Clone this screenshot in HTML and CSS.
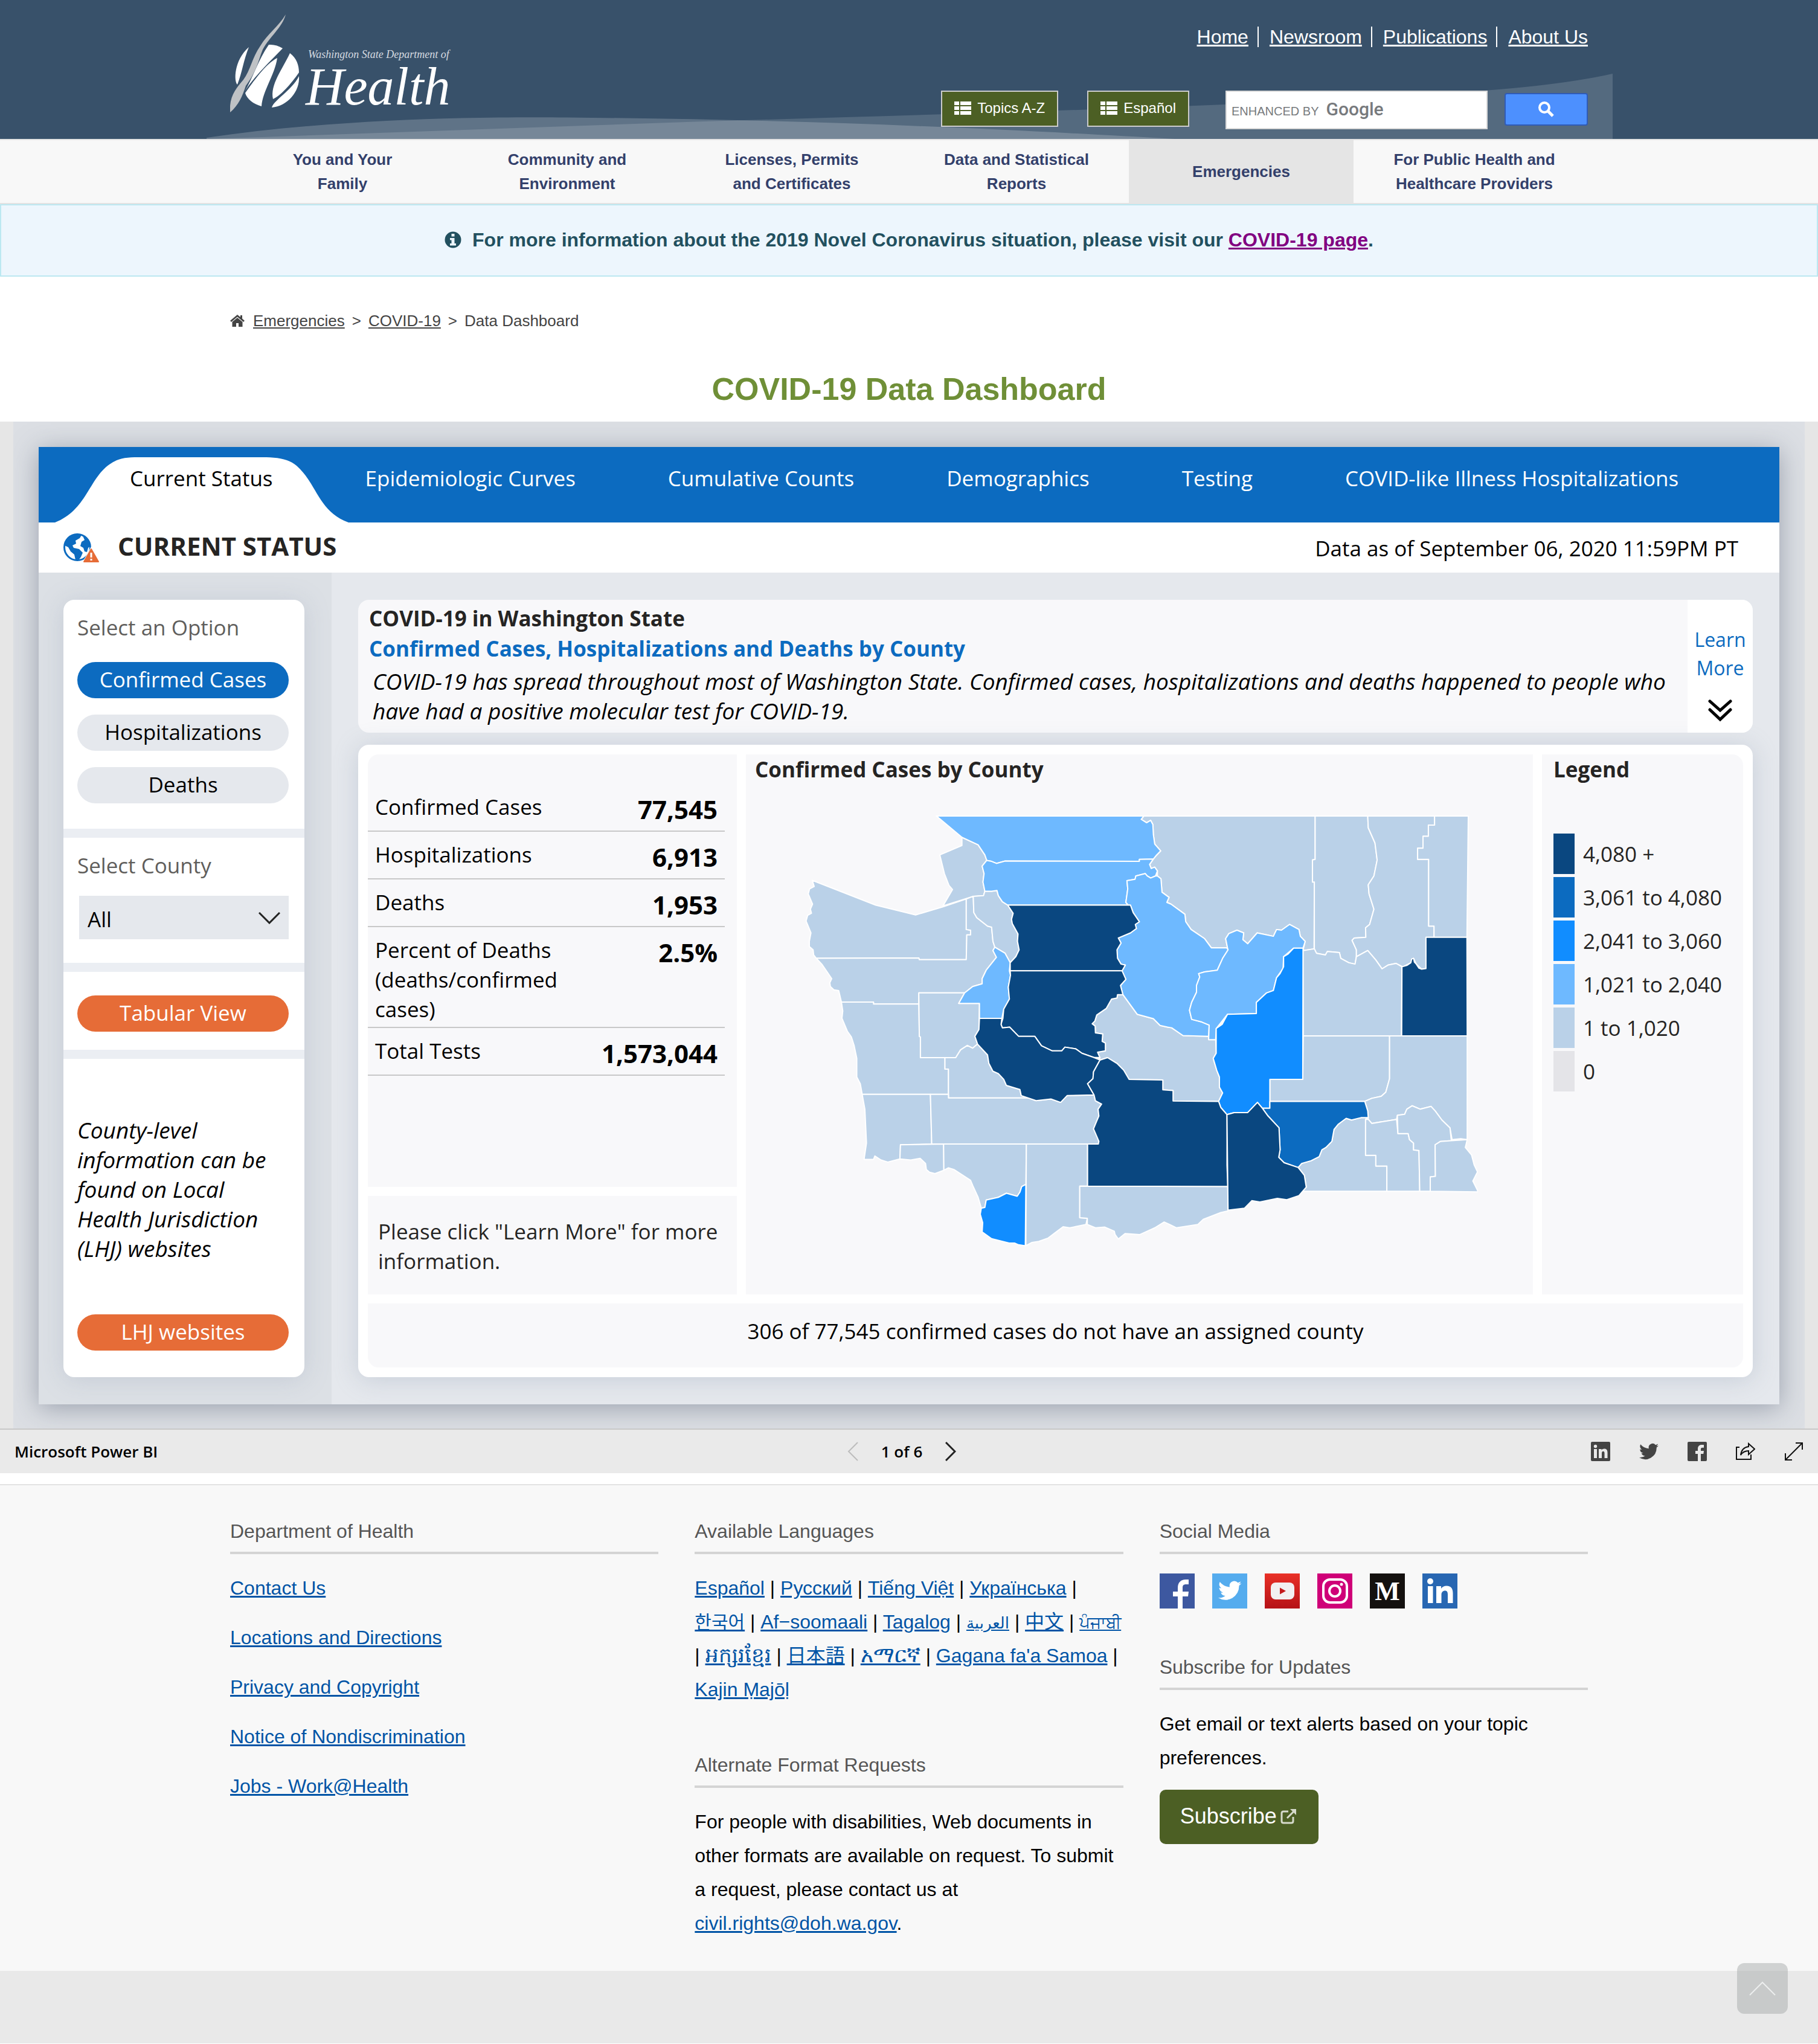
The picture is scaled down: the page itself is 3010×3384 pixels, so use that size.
FILE: index.html
```html
<!DOCTYPE html>
<html lang="en">
<head>
<meta charset="utf-8">
<meta name="viewport" content="width=device-width, initial-scale=1">
<title>COVID-19 Data Dashboard :: Washington State Department of Health</title>
<link rel="stylesheet" href="styles.css">
</head>
<body>
<header class="site-header">
  <svg class="swoosh" viewBox="342 120 2328 110" preserveAspectRatio="none" aria-hidden="true">
    <path d="M342 230C700 218 1050 204 1400 194C1800 182 2160 171 2457 150Q2590 140 2670 122V230Z" fill="#fff" fill-opacity=".145"/>
    <path d="M342 228C560 196 800 193 940 194.500C1300 198 1560 208 1945 230H342Z" fill="#fff" fill-opacity=".2"/>
  </svg>
  <div class="container header-inner">
    <a class="logo" href="#" aria-label="Washington State Department of Health">
      <svg width="390" height="186" viewBox="382 22 390 186">
        <path d="M413 78C388 100 388 135 394 140C402 120 404 100 413 78Z" fill="#fff"/>
        <path d="M446 74Q458 73 469 80C452 98 420 128 406 152C420 128 428 100 446 74Z" fill="#fff"/>
        <path d="M460 96C456 124 436 150 434 176C420 172 410 164 407 154C420 136 440 106 460 96Z" fill="#fff"/>
        <path d="M481 88C492 96 496 108 496 120C482 140 466 158 453 164C448 140 468 116 481 88Z" fill="#fff"/>
        <path d="M496 126C498 152 476 176 451 178C454 166 484 150 496 126Z" fill="#fff"/>
        <path d="M474 24C462 44 444 56 432 76C418 96 416 116 404 132C392 146 380 160 382 186C396 174 402 160 408 142C426 118 428 102 436 82C448 60 468 46 474 24Z" fill="#bfc2c5"/>
        <text x="511" y="96" class="logo-small">Washington State Department of</text>
        <text x="507" y="173" class="logo-big">Health</text>
      </svg>
    </a>
    <div class="header-tools">
      <nav class="top-links" aria-label="Utility">
        <a href="#">Home</a><a href="#">Newsroom</a><a href="#">Publications</a><a href="#">About Us</a>
      </nav>
      <div class="search-row">
        <button class="green-btn" type="button"><svg width="28" height="22" viewBox="0 0 28 22" fill="#fff"><path d="M0 0h8v6H0zM10 0h18v6H10zM0 8h8v6H0zM10 8h18v6H10zM0 16h8v6H0zM10 16h18v6H10z"/></svg>Topics A-Z</button>
        <button class="green-btn" type="button"><svg width="28" height="22" viewBox="0 0 28 22" fill="#fff"><path d="M0 0h8v6H0zM10 0h18v6H10zM0 8h8v6H0zM10 8h18v6H10zM0 16h8v6H0zM10 16h18v6H10z"/></svg>Español</button>
        <form class="search">
          <div class="search-field">
            <input id="q" type="text">
            <label for="q"><span>ENHANCED BY</span><b>Google</b></label>
          </div>
          <button class="search-btn" type="button" aria-label="Search"><svg width="28" height="28" viewBox="0 0 28 28" fill="none" stroke="#fff" stroke-width="4"><circle cx="11" cy="11" r="8"/><path d="M17 17l8 8" stroke-width="5"/></svg></button>
        </form>
      </div>
    </div>
  </div>
</header>

<nav class="main-nav" aria-label="Main">
  <div class="container nav-inner">
    <a href="#">You and Your<br>Family</a>
    <a href="#">Community and<br>Environment</a>
    <a href="#">Licenses, Permits<br>and Certificates</a>
    <a href="#">Data and Statistical<br>Reports</a>
    <a href="#" class="active">Emergencies</a>
    <a href="#">For Public Health and<br>Healthcare Providers</a>
  </div>
</nav>

<div class="alert">
  <svg width="28" height="28" viewBox="0 0 28 28"><circle cx="14" cy="14" r="13.500" fill="#22505f"/><path d="M11.500 4h5v4.500h-5zM9 11h7.500v9H19v3.500H9V20h2.500v-5.500H9z" fill="#edf6fd"/></svg>
  <p>For more information about the 2019 Novel Coronavirus situation, please visit our <a href="#">COVID-19 page</a>.</p>
</div>

<div class="container breadcrumb">
  <svg width="24" height="20" viewBox="0 0 24 20" fill="#444"><path d="M12 0L0 10l2 2L12 3.500 22 12l2-2-4-3.500V1h-3v3z"/><path d="M12 5L3.500 12v8H10v-6h4v6h6.500v-8z"/></svg>
  <a href="#">Emergencies</a><span>&gt;</span><a href="#">COVID-19</a><span>&gt;</span><span>Data Dashboard</span>
</div>
<h1>COVID-19 Data Dashboard</h1>

<section class="embed">
  <div class="canvas">
    <div class="report">
      <nav class="tabs" aria-label="Report pages">
        <a class="tab current" href="#">
          <svg class="tab-shape" viewBox="0 0 486 108" preserveAspectRatio="none" aria-hidden="true"><path d="M0 108C52 88 56 36 90 12C104 2 116 0 138 0H344C366 0 386 2 400 14C434 44 436 90 486 108Z" fill="#fff"/></svg>
          <span>Current Status</span></a>
        <a class="tab" href="#">Epidemiologic Curves</a>
        <a class="tab" href="#">Cumulative Counts</a>
        <a class="tab" href="#">Demographics</a>
        <a class="tab" href="#">Testing</a>
        <a class="tab" href="#">COVID-like Illness Hospitalizations</a>
      </nav>
      <div class="status-row">
        <svg width="60" height="50" viewBox="0 0 60 50">
          <circle cx="23" cy="23" r="21.500" fill="#fff" stroke="#0c6bc0" stroke-width="3"/>
          <path d="M2 20C3 10 12 2 22 2l8 1-3 5-7 4 1 5-6 3 2 4 9 2 6 6-3 7-5 7-4-2-2-9-6-5-4-7z" fill="#0c6bc0"/>
          <path d="M32 4c7 3 12 9 13 17l-4 3-2 7-4-1-2-6-5-3 2-7 5-3z" fill="#0c6bc0"/>
          <path d="M46 22L61 49H31z" fill="#fff"/>
          <path d="M46 26l12 21H34z" fill="#e66c37" stroke="#e66c37" stroke-width="2" stroke-linejoin="round"/>
          <path d="M46 32v8M46 42v3" stroke="#fff" stroke-width="3"/>
        </svg>
        <h2>CURRENT STATUS</h2>
        <p>Data as of September 06, 2020 11:59PM PT</p>
      </div>
      <div class="report-body">
        <aside class="side">
          <div class="side-card">
            <section class="s-options">
              <h3>Select an Option</h3>
              <button class="pill selected" type="button">Confirmed Cases</button>
              <button class="pill" type="button">Hospitalizations</button>
              <button class="pill" type="button">Deaths</button>
            </section>
            <section class="s-county">
              <label for="county">Select County</label>
              <div class="select-wrap">
                <select id="county"><option>All</option></select>
                <svg width="36" height="20" viewBox="0 0 36 20" fill="none" stroke="#222" stroke-width="3"><path d="M1 1l17 17L35 1"/></svg>
              </div>
            </section>
            <section class="s-tab"><button class="pill orange" type="button">Tabular View</button></section>
            <section class="s-lhj">
              <p>County-level information can be found on Local Health Jurisdiction (LHJ) websites</p>
              <button class="pill orange" type="button">LHJ websites</button>
            </section>
          </div>
        </aside>
        <div class="main">
          <div class="intro">
            <div class="intro-text">
              <h3>COVID-19 in Washington State</h3>
              <h3 class="blue">Confirmed Cases, Hospitalizations and Deaths by County</h3>
              <p>COVID-19 has spread throughout most of Washington State. Confirmed cases, hospitalizations and deaths happened to people who<br>have had a positive molecular test for COVID-19.</p>
            </div>
            <a class="learn" href="#">Learn<br>More
              <svg width="40" height="38" viewBox="0 0 40 38" fill="none" stroke="#000" stroke-width="5" stroke-linecap="round"><path d="M3 4l17 15L37 4M3 18l17 16 17-16"/></svg>
            </a>
          </div>
          <div class="data-card">
            <div class="cell stats">
              <table>
                <tr><th scope="row">Confirmed Cases</th><td>77,545</td></tr>
                <tr><th scope="row">Hospitalizations</th><td>6,913</td></tr>
                <tr><th scope="row">Deaths</th><td>1,953</td></tr>
                <tr><th scope="row">Percent of Deaths (deaths/confirmed cases)</th><td>2.5%</td></tr>
                <tr><th scope="row">Total Tests</th><td>1,573,044</td></tr>
              </table>
            </div>
            <div class="cell map">
              <h3>Confirmed Cases by County</h3>
              <svg class="map-svg" viewBox="1327 1346 1120 725" role="img" aria-label="Map of Washington counties">
                <g transform="translate(1240 1220) scale(.4464 .5612)">
                  <g class="c1">
                    <path d="M790 298L850 320 875 350 882 366 865 383 872 405 868 430 875 457 870 470 832 472 720 500 755 452 742 440 725 405 708 350 790 322Z"/>
                    <path d="M235 425L470 498 618 527 720 503 806 480 806 570 822 572 822 586 808 586 806 659 632 659 630 654 250 655 240 645 238 630 224 620 224 605 230 580 212 545 218 528 232 522 228 510 236 495 220 465 225 450 242 443Z"/>
                    <path d="M806 480L832 472 834 520 845 535 885 560 900 563 905 605 912 622 905 632 918 652 880 690 865 715 865 730 830 738 800 757 630 757 630 790 462 790 462 784 343 784 333 750 315 748 302 738 300 727 307 715 290 695 270 672 250 655 630 654 632 659 806 659 808 586 822 586 822 572 806 570Z"/>
                    <path d="M832 472L870 470 875 457 900 457 920 455 925 470 940 488 960 498 980 522 974 540 977 553 998 583 996 605 1002 630 990 650 969 668 950 640 912 622 905 605 900 563 885 560 845 535 834 520Z"/>
                    <path d="M343 784L462 784 462 790 630 790 632 885 636 887 636 948 727 948 727 982 740 982 740 1056 420 1056 413 1025 400 1005 400 950 390 912 380 887 365 870 345 832 348 810Z"/>
                    <path d="M630 757L800 757 778 788 855 788 853 865 838 885 848 908 830 920 810 912 785 925 767 948 636 948 636 887 632 885Z"/>
                    <path d="M767 948L785 925 810 912 830 920 848 908 885 940 890 965 905 988 925 995 945 1012 955 1030 1005 1042 1010 1060 1040 1067 740 1067 740 982 727 982 727 948Z"/>
                    <path d="M420 1056L673 1056 678 1203 562 1205 560 1247 515 1256 490 1250 467 1238 462 1248 427 1248 436 1200 430 1100Z"/>
                    <path d="M673 1056L740 1056 740 1067 1040 1067 1065 1075 1120 1070 1156 1080 1180 1060 1280 1058 1285 1075 1308 1085 1295 1100 1298 1120 1290 1135 1278 1158 1287 1170 1298 1195 1296 1203 678 1203Z"/>
                    <path d="M562 1205L722 1203 723 1280 690 1290 670 1286 658 1278 655 1260 635 1245 600 1250 560 1247Z"/>
                    <path d="M722 1203L1029 1203 1027 1322 1012 1328 1005 1345 995 1357 955 1348 925 1360 880 1368 875 1390 862 1392 850 1360 830 1325 822 1310 760 1278 740 1273 723 1280Z"/>
                    <path d="M1029 1203L1256 1203 1256 1327 1227 1327 1227 1420 1255 1422 1250 1440 1190 1450 1165 1447 1135 1465 1110 1480 1075 1490 1050 1493 1027 1503Z"/>
                    <path d="M1387 762L1440 820 1500 833 1525 853 1553 858 1568 860 1610 883 1705 885 1705 895 1731 895 1733 935 1722 950 1735 985 1745 1005 1745 1035 1757 1052 1742 1077 1573 1076 1573 1045 1535 1043 1535 1014 1410 1012 1365 965 1330 948 1302 955 1293 932 1322 928 1322 905 1310 900 1312 878 1285 875 1284 855 1273 848 1283 840 1290 822 1325 803 1345 775 1365 772 1367 762Z"/>
                    <path d="M1465 235L2100 235 2100 363 2090 365 2090 430 2097 430 2096 627 2055 632 2063 605 2045 590 2040 570 2005 555 1975 572 1957 570 1945 590 1915 585 1885 580 1850 612 1832 600 1835 580 1810 572 1780 582 1768 597 1775 624 1715 624 1690 597 1640 570 1620 547 1617 525 1565 495 1550 490 1558 475 1532 460 1528 420 1515 412 1515 397 1505 386 1492 390 1486 378 1500 362 1510 352 1527 338 1505 318 1500 290 1498 260 1490 248 1475 255 1455 245Z"/>
                    <path d="M2100 235L2295 235 2297 270 2322 315 2330 365 2318 412 2297 438 2300 465 2318 510 2302 555 2287 565 2288 593 2245 595 2237 602 2253 630 2253 650 2248 672 2225 668 2195 655 2190 638 2145 635 2138 645 2105 640 2097 627 2097 430 2090 430 2090 365 2100 363Z"/>
                    <path d="M2295 235L2543 235 2543 262 2520 262 2520 295 2500 295 2500 330 2480 330 2480 363 2521 363 2521 560 2541 560 2541 593 2511 593 2511 685 2495 687 2475 672 2465 655 2455 668 2425 680 2400 670 2370 675 2348 686 2325 660 2295 632 2253 650 2253 630 2237 602 2245 595 2288 593 2287 565 2302 555 2318 510 2300 465 2297 438 2318 412 2330 365 2322 315 2297 270Z"/>
                    <path d="M2543 235L2668 235 2663 593 2541 593 2541 560 2521 560 2521 363 2480 363 2480 330 2500 330 2500 295 2520 295 2520 262 2543 262Z"/>
                    <path d="M2055 632L2097 627 2105 640 2138 645 2145 635 2190 638 2195 655 2225 668 2248 672 2253 650 2295 632 2325 660 2348 686 2370 675 2400 670 2422 680 2420 884 2056 884Z"/>
                    <path d="M2056 884L2376 884 2376 1010 2362 1050 2345 1062 2310 1068 2284 1077 1932 1077 1932 1012 2054 1012Z"/>
                    <path d="M2376 884L2664 884 2664 1190 2640 1187 2608 1190 2600 1155 2570 1132 2545 1105 2530 1092 2490 1100 2460 1090 2440 1100 2432 1115 2405 1118 2402 1130 2310 1142 2297 1130 2295 1105 2284 1077 2310 1068 2345 1062 2362 1050 2376 1010Z"/>
                    <path d="M1227 1327L1776 1328 1777 1400 1750 1405 1685 1425 1665 1440 1585 1450 1560 1440 1540 1433 1505 1450 1450 1470 1395 1467 1370 1483 1358 1470 1355 1460 1320 1448 1285 1450 1255 1440 1255 1422 1227 1420Z"/>
                    <path d="M2037 1272L2050 1260 2085 1252 2115 1240 2125 1220 2140 1213 2162 1195 2170 1160 2185 1145 2215 1127 2235 1132 2270 1125 2297 1125 2287 1130 2287 1236 2325 1236 2325 1268 2366 1268 2366 1342 2050 1342 2067 1330 2060 1295Z"/>
                    <path d="M2287 1130L2297 1130 2310 1142 2402 1130 2407 1172 2445 1172 2450 1190 2465 1200 2465 1220 2485 1222 2488 1342 2366 1342 2366 1268 2325 1268 2325 1236 2287 1236Z"/>
                    <path d="M2405 1118L2432 1115 2440 1100 2460 1090 2490 1100 2530 1092 2545 1105 2570 1132 2600 1155 2605 1193 2565 1195 2545 1205 2546 1298 2527 1300 2527 1342 2488 1342 2485 1222 2465 1220 2465 1200 2450 1190 2445 1172 2407 1172Z"/>
                    <path d="M2605 1193L2664 1190 2657 1213 2680 1235 2690 1265 2702 1285 2685 1312 2705 1344 2527 1342 2527 1300 2546 1298 2545 1205 2565 1195Z"/>
                  </g>
                  <g class="c2">
                    <path d="M695 235L1465 235 1455 245 1475 255 1490 248 1498 260 1500 290 1505 318 1527 338 1510 352 1500 362 1448 363 1448 369 950 368 918 375 900 369 882 366 875 350 850 320 790 298Z"/>
                    <path d="M882 366L900 369 918 375 950 368 1448 369 1448 363 1500 362 1486 378 1492 390 1505 386 1515 397 1508 412 1490 418 1477 412 1470 405 1435 412 1432 422 1402 426 1405 450 1398 490 1407 498 960 498 940 488 925 470 920 455 900 457 875 457 868 430 872 405 865 383Z"/>
                    <path d="M912 622L950 640 969 668 966 692 970 705 962 740 966 775 945 805 938 832 855 832 855 788 778 788 800 757 830 738 865 730 865 715 880 690 918 652 905 632Z"/>
                    <path d="M1515 412L1508 412 1490 418 1477 412 1470 405 1435 412 1432 422 1402 426 1405 450 1398 490 1407 498 1415 498 1425 520 1448 547 1433 555 1437 567 1415 580 1370 595 1380 610 1365 630 1367 655 1380 672 1396 675 1384 692 1398 717 1378 735 1387 762 1440 820 1500 833 1525 853 1553 858 1568 860 1610 883 1705 885 1707 852 1680 843 1642 835 1634 808 1642 785 1660 755 1660 735 1672 710 1668 700 1690 695 1737 690 1757 655 1777 630 1772 624 1715 624 1690 597 1640 570 1620 547 1617 525 1565 495 1550 490 1558 475 1532 460 1528 420Z"/>
                    <path d="M1775 624L1768 597 1780 582 1810 572 1835 580 1832 600 1850 612 1885 580 1915 585 1945 590 1957 570 1975 572 2005 555 2040 570 2045 590 2063 605 2055 625 2020 625 1983 650 1981 685 1957 712 1945 750 1920 757 1882 785 1882 818 1775 820 1733 862 1731 895 1705 895 1707 852 1680 843 1642 835 1634 808 1642 785 1660 755 1660 735 1672 710 1668 700 1690 695 1737 690 1757 655 1777 630Z"/>
                  </g>
                  <g class="c3">
                    <path d="M1027 1322L1025 1503 1000 1500 985 1495 965 1495 900 1482 865 1462 867 1435 858 1410 862 1392 875 1390 880 1368 925 1360 955 1348 995 1357 1005 1345 1012 1328Z"/>
                    <path d="M2055 625L2054 1012 1932 1012 1932 1097 1904 1097 1886 1080 1850 1110 1800 1110 1773 1116 1750 1095 1742 1077 1757 1052 1745 1035 1745 1005 1735 985 1722 950 1733 935 1733 862 1755 850 1775 820 1882 818 1882 785 1920 757 1945 750 1957 712 1970 700 1983 680 1983 650 2000 642 2020 625Z"/>
                  </g>
                  <g class="c4">
                    <path d="M1904 1097L1932 1097 1932 1077 2284 1077 2295 1105 2297 1125 2270 1125 2235 1132 2215 1127 2185 1145 2170 1160 2162 1195 2140 1213 2125 1220 2115 1240 2085 1252 2050 1260 2037 1272 1985 1258 1965 1242 1970 1220 1966 1155 1925 1120Z"/>
                  </g>
                  <g class="c5">
                    <path d="M960 498L1415 498 1425 520 1448 547 1433 555 1437 567 1415 580 1370 595 1380 610 1365 630 1367 655 1380 672 1396 675 1384 692 969 692 969 668 990 650 1002 630 996 605 998 583 977 553 974 540 980 522Z"/>
                    <path d="M969 692L1384 692 1398 717 1378 735 1387 762 1367 762 1365 772 1345 775 1325 803 1290 822 1283 840 1273 848 1284 855 1285 875 1312 878 1310 900 1322 905 1322 928 1293 932 1302 948 1278 947 1235 935 1212 922 1172 917 1160 928 1125 928 1085 913 1060 885 1000 885 967 858 940 860 935 850 942 832 945 805 966 775 962 740 970 705Z"/>
                    <path d="M855 832L938 832 935 850 940 860 967 858 1000 885 1060 885 1085 913 1125 928 1160 928 1172 917 1212 922 1235 935 1278 947 1302 955 1278 990 1276 1010 1256 1025 1280 1058 1180 1060 1156 1080 1120 1070 1065 1075 1010 1060 1005 1042 955 1030 945 1012 925 995 905 988 890 965 885 940 848 908 838 885 853 865Z"/>
                    <path d="M1302 955L1330 948 1365 965 1390 985 1410 1012 1535 1014 1535 1043 1573 1045 1573 1076 1742 1077 1750 1095 1773 1116 1773 1265 1776 1328 1256 1327 1256 1203 1296 1203 1298 1195 1278 1158 1290 1135 1298 1120 1295 1100 1308 1085 1285 1075 1280 1058 1256 1025 1276 1010 1278 990Z"/>
                    <path d="M1773 1116L1800 1110 1850 1110 1886 1080 1904 1097 1925 1120 1966 1155 1970 1220 1965 1242 1985 1258 2037 1272 2060 1295 2067 1330 2040 1355 1995 1367 1960 1363 1895 1374 1865 1370 1838 1392 1777 1398Z"/>
                    <path d="M2511 593L2663 593 2664 884 2421 884 2422 680 2440 676 2455 668 2458 657 2465 655 2468 666 2475 672 2485 684 2495 687 2511 685Z"/>
                  </g>
                </g>
              </svg>
            </div>
            <div class="cell legend">
              <h3>Legend</h3>
              <ul>
                <li><i class="k5"></i>4,080 +</li>
                <li><i class="k4"></i>3,061 to 4,080</li>
                <li><i class="k3"></i>2,041 to 3,060</li>
                <li><i class="k2"></i>1,021 to 2,040</li>
                <li><i class="k1"></i>1 to 1,020</li>
                <li><i class="k0"></i>0</li>
              </ul>
            </div>
            <div class="cell note"><p>Please click "Learn More" for more information.</p></div>
            <div class="cell unassigned">306 of 77,545 confirmed cases do not have an assigned county</div>
          </div>
        </div>
      </div>
    </div>
  </div>
  <div class="embed-bar">
    <span>Microsoft Power BI</span>
    <div class="pager">
      <button type="button" aria-label="Previous page"><svg width="18" height="32" viewBox="0 0 18 32" fill="none" stroke="#bdbdbd" stroke-width="2"><path d="M17 1L2 16l15 15"/></svg></button>
      <span>1 of 6</span>
      <button type="button" aria-label="Next page"><svg width="18" height="32" viewBox="0 0 18 32" fill="none" stroke="#222" stroke-width="3"><path d="M1 1l15 15L1 31"/></svg></button>
    </div>
    <div class="share">
      <a href="#" aria-label="LinkedIn"><svg width="32" height="32" viewBox="0 0 32 32"><rect width="32" height="32" rx="2" fill="#444"/><g fill="#eaeaea"><circle cx="7.500" cy="7.500" r="2.700"/><path d="M5 12h5v15H5zM13 12h4.600v2c1-1.600 2.600-2.400 4.600-2.400 4 0 5.300 2.400 5.300 6.600V27h-5v-8c0-2-.5-3.300-2.200-3.300S18 17 18 19v8h-5z"/></g></svg></a>
      <a href="#" aria-label="Twitter"><svg width="32" height="32" viewBox="0 0 24 24" fill="#444"><path d="M24 4.600a10 10 0 0 1-2.800.8 5 5 0 0 0 2.200-2.700c-1 .6-2 1-3.100 1.200a4.900 4.900 0 0 0-8.400 4.500A14 14 0 0 1 1.700 3.200 4.900 4.900 0 0 0 3.200 9.700a5 5 0 0 1-2.200-.6 4.900 4.900 0 0 0 3.900 4.900 5 5 0 0 1-2.200.1 4.900 4.900 0 0 0 4.600 3.400A9.900 9.900 0 0 1 0 19.500 14 14 0 0 0 21.500 7.100 10 10 0 0 0 24 4.600z"/></svg></a>
      <a href="#" aria-label="Facebook"><svg width="32" height="32" viewBox="0 0 32 32"><rect width="32" height="32" rx="2" fill="#444"/><path d="M17 32V20h-4v-5h4v-3.500C17 7.500 19.400 5 23.300 5H27v4.800h-2.600c-2 0-2.400 1-2.400 2.400V15h5l-.7 5H22v12z" fill="#eaeaea"/></svg></a>
      <a href="#" aria-label="Share"><svg width="32" height="32" viewBox="0 0 32 32" fill="none" stroke="#111" stroke-width="2"><path d="M6 9H1v20h24v-8"/><path d="M21 3l10 9-10 9v-6c-6 0-10 2-13 7 1-8 5-13 13-14z"/></svg></a>
      <a href="#" aria-label="Full screen"><svg width="32" height="32" viewBox="0 0 32 32" fill="none" stroke="#111" stroke-width="2"><path d="M3 29L29 3M19 2h11v11M2 19v11h11"/></svg></a>
    </div>
  </div>
</section>

<footer>
  <div class="container cols">
    <div>
      <h4>Department of Health</h4>
      <ul class="links">
        <li><a href="#">Contact Us</a></li>
        <li><a href="#">Locations and Directions</a></li>
        <li><a href="#">Privacy and Copyright</a></li>
        <li><a href="#">Notice of Nondiscrimination</a></li>
        <li><a href="#">Jobs - Work@Health</a></li>
      </ul>
    </div>
    <div>
      <h4>Available Languages</h4>
      <p class="langs"><a href="#">Español</a> | <a href="#">Русский</a> | <a href="#">Tiếng Việt</a> | <a href="#">Українська</a> |<br>
        <a href="#" lang="ko">한국어</a> | <a href="#">Af−soomaali</a> | <a href="#">Tagalog</a> | <a href="#" lang="ar">العربية</a> | <a href="#" lang="zh">中文</a> | <a href="#" lang="pa">ਪੰਜਾਬੀ</a><br>
        | <a href="#" lang="km">អក្សរខ្មែរ</a> | <a href="#" lang="ja">日本語</a> | <a href="#" lang="am">አማርኛ</a> | <a href="#">Gagana fa'a Samoa</a> |<br>
        <a href="#">Kajin Ṃajōḷ</a></p>
      <h4 class="second">Alternate Format Requests</h4>
      <p>For people with disabilities, Web documents in other formats are available on request. To submit a request, please contact us at<br><a href="#">civil.rights@doh.wa.gov</a>.</p>
    </div>
    <div>
      <h4>Social Media</h4>
      <div class="social">
        <a href="#" aria-label="Facebook"><svg viewBox="0 0 58 58"><rect width="58" height="58" fill="#3d58a0"/><path d="M30 58V38h-8v-8h8v-6c0-9 5-14 13-14h5v8h-4c-5 0-6 2-6 6v6h10l-1 8h-9v20z" fill="#fff"/></svg></a>
        <a href="#" aria-label="Twitter"><svg viewBox="0 0 58 58"><rect width="58" height="58" fill="#55acee"/><path transform="translate(10 9) scale(1.600)" fill="#fff" d="M24 4.600a10 10 0 0 1-2.800.8 5 5 0 0 0 2.200-2.700c-1 .6-2 1-3.100 1.200a4.900 4.900 0 0 0-8.400 4.500A14 14 0 0 1 1.700 3.200 4.900 4.900 0 0 0 3.200 9.700a5 5 0 0 1-2.200-.6 4.900 4.900 0 0 0 3.900 4.900 5 5 0 0 1-2.200.1 4.900 4.900 0 0 0 4.600 3.400A9.900 9.900 0 0 1 0 19.500 14 14 0 0 0 21.500 7.100 10 10 0 0 0 24 4.600z"/></svg></a>
        <a href="#" aria-label="YouTube"><svg viewBox="0 0 58 58"><defs><linearGradient id="yt" x1="0" y1="0" x2="0" y2="1"><stop offset="0" stop-color="#e93127"/><stop offset="1" stop-color="#b51217"/></linearGradient></defs><rect width="58" height="58" fill="url(#yt)"/><rect x="10" y="15" width="39" height="28" rx="8" fill="#f2f0f0"/><path d="M25 23.500v11l10-5.500z" fill="#c31a1c"/></svg></a>
        <a href="#" aria-label="Instagram"><svg viewBox="0 0 58 58" fill="none" stroke="#fff" stroke-width="4"><rect width="58" height="58" fill="#cf0078" stroke="none"/><rect x="10" y="10" width="39" height="38" rx="11"/><circle cx="29" cy="29" r="9"/><circle cx="40" cy="18" r="2.500" fill="#fff" stroke="none"/></svg></a>
        <a href="#" aria-label="Medium"><svg viewBox="0 0 58 58"><rect width="58" height="58" fill="#14110f"/><text x="29" y="44" text-anchor="middle" class="medium-m">M</text></svg></a>
        <a href="#" aria-label="LinkedIn"><svg viewBox="0 0 58 58"><rect width="58" height="58" fill="#2867b2"/><g fill="#fff"><circle cx="13" cy="13" r="5"/><path d="M9 21h8.500v28H9zM23 21h8v4c2-3 5-4.500 9-4.500 8 0 10.500 5 10.500 12.500v16H42V35c0-4-1-6.500-4.500-6.500S31.500 31 31.500 35v14H23z"/></g></svg></a>
      </div>
      <h4 class="second">Subscribe for Updates</h4>
      <p>Get email or text alerts based on your topic preferences.</p>
      <button class="subscribe" type="button">Subscribe<svg width="27" height="26" viewBox="0 0 27 26" fill="none" stroke="#d6dacc" stroke-width="3"><path d="M13 5H5Q2 5 2 8v13q0 3 3 3h13q3 0 3-3v-7M11 16L23 4"/><path d="M16 1h10v10z" fill="#d6dacc" stroke="none"/></svg></button>
    </div>
  </div>
</footer>
<div class="base-strip"></div>
<a class="to-top" href="#" aria-label="Back to top"><svg width="44" height="24" viewBox="0 0 44 24" fill="none" stroke="#eceeee" stroke-width="2"><path d="M1 23L22 2l21 21"/></svg></a>
</body>
</html>
```
FILE: styles.css
```css
* { box-sizing: border-box; }
body { margin: 0; background: #fff; color: #000; font: 32px/56px "Liberation Sans", Arial, "Noto Sans CJK KR", "DejaVu Sans", sans-serif; }
h1, h2, h3, h4, p, ul { margin: 0; padding: 0; }
ul { list-style: none; }
svg { display: block; flex: none; }
button, input, select { font: inherit; margin: 0; }
button { cursor: pointer; }
.container { width: 75%; max-width: 2248px; margin: 0 auto; }

/* header */
.site-header { position: relative; background: #38516a; }
.swoosh { position: absolute; left: 342px; right: 340px; bottom: 0; width: calc(100% - 682px); height: 110px; }
.header-inner { position: relative; display: flex; justify-content: space-between; min-height: 230px; }
.logo { padding-top: 22px; }
.logo-small { font: italic 18px "Liberation Serif", serif; fill: #d5dae0; }
.logo-big { font: italic 88px "Liberation Serif", serif; fill: #fff; }
.header-tools { display: flex; flex-direction: column; align-items: flex-end; padding-top: 44px; gap: 72px; }
.top-links { display: flex; line-height: 34px; }
.top-links a { color: #fff; padding: 0 15px 0 18px; border-right: 2px solid #fff; }
.top-links a:last-child { padding-right: 0; border: 0; }
.search-row { display: flex; align-items: flex-start; gap: 48px; }
.green-btn { display: flex; align-items: center; gap: 10px; height: 60px; padding: 0 20px 2px; border: 2px solid #ccc; background: #4c5f24; color: #fff; font-size: 24px; line-height: 36px; }
.search { display: flex; align-items: flex-start; gap: 28px; margin-left: 12px; }
.search-field { position: relative; }
.search-field input { display: block; width: 434px; height: 64px; border: 2px solid #d9d9d9; background: #fff; padding: 0 12px; }
.search-field label { position: absolute; left: 10px; top: 12px; display: flex; align-items: baseline; gap: 12px; color: #777a7d; line-height: 38px; pointer-events: none; }
.search-field span { font-size: 20px; }
.search-field b { font: 500 30px/38px Roboto, sans-serif; }
.search-btn { display: flex; align-items: center; justify-content: center; width: 138px; height: 54px; margin-top: 4px; border: 2px solid #2f5bb7; border-radius: 4px; background: #4d90fe; padding: 0; }

.main-nav { background: #f8f8f8; border-top: 2px solid #e3e3e3; border-bottom: 2px solid #e3e3e3; }
.nav-inner { display: flex; min-height: 104px; }
.nav-inner a { flex: 0 0 372px; display: flex; align-items: center; justify-content: center; text-align: center; color: #33406b; font-size: 26px; font-weight: bold; line-height: 40px; text-decoration: none; }
.nav-inner a:last-child { flex: 1; padding-left: 12px; }
.nav-inner .active { background: #e5e5e5; }

.alert { display: flex; align-items: center; justify-content: center; gap: 18px; padding: 29px 0 31px; border: 2px solid #bce8f1; background: #edf6fd; color: #22505f; font-weight: bold; }
.alert a { color: #810081; }

.breadcrumb { display: flex; align-items: center; gap: 12px; padding-top: 53px; color: #444; font-size: 26px; line-height: 40px; }
.breadcrumb svg { margin-right: 2px; }
.breadcrumb a { color: inherit; }
h1 { padding: 59px 0 20px; text-align: center; color: #6f8f37; font-size: 52px; line-height: 68px; }

/* report */
.embed { background: #e6e6e6; font-family: "Segoe UI", "Open Sans", sans-serif; font-size: 35px; line-height: 49px; }
.canvas { margin: 0 22px; padding: 42px 42px 40px; background: #dcdfe4; overflow: hidden; }
.report { background: #e5e8ed; box-shadow: 0 6px 40px rgba(90, 100, 120, .5); }
.tabs { display: flex; gap: 153px; height: 125px; padding: 27px 0 0 151px; background: #0c6bc0; }
.tab { position: relative; color: #fff; text-decoration: none; white-space: nowrap; }
.tab.current { color: #000; }
.tab.current span { position: relative; }
.tab-shape { position: absolute; left: -124px; top: -10px; width: 486px; height: 108px; }
.status-row { display: flex; align-items: center; min-height: 83px; padding: 2px 68px 0 41px; background: #fff; }
.status-row h2 { margin-left: 30px; color: #252423; font-size: 42px; line-height: 58px; padding-bottom: 8px; }
.status-row p { margin-left: auto; }
.report-body { display: flex; }
.side { flex: 0 0 485px; display: flex; padding: 45px 45px 45px 41px; background: #dce0e5; }
.side-card { flex: 1; border-radius: 18px; background: #fff; box-shadow: 0 4px 40px rgba(130, 145, 170, .25); }
.side-card section { padding: 21px 26px 0 23px; border-bottom: 15px solid #ebeef3; }
.side-card section:last-child { border: 0; }
.side h3, .side label { display: block; color: #605e5c; font-size: 35px; font-weight: 400; line-height: 49px; }
.pill { display: block; width: 100%; height: 60px; border: 0; border-radius: 30px; background: #e5e8ed; color: #000; line-height: 56px; padding: 0 0 3px; }
.pill.selected { background: #0c6bc0; color: #fff; }
.pill.orange { background: #e66c37; color: #fff; }
.s-options .pill { margin-bottom: 27px; }
.s-options h3 { margin-bottom: 33px; }
.side-card .s-options { padding-bottom: 15px; }
.side-card .s-county { padding-top: 21px; padding-bottom: 39px; }
.select-wrap { position: relative; margin: 26px 0 0 3px; }
.select-wrap select { appearance: none; display: block; width: 100%; height: 72px; padding: 4px 14px 0; border: 0; border-radius: 0; background: #e5e8ed; color: #000; }
.select-wrap svg { position: absolute; right: 14px; top: 27px; pointer-events: none; }
.side-card .s-tab { padding-top: 39px; padding-bottom: 30px; }
.side-card .s-lhj { padding-top: 93px; padding-bottom: 42px; }
.s-lhj p { margin-bottom: 85px; font-size: 37px; font-style: italic; }

.main { flex: 1; padding: 45px 44px; }
.intro { display: flex; margin-bottom: 20px; border-radius: 18px; overflow: hidden; background: #f8f8fa; }
.intro-text { flex: 1; padding: 6px 18px 12px; }
.intro h3, .data-card h3 { color: #252423; font-size: 35px; line-height: 50px; }
.intro h3.blue { color: #0c6bc0; }
.intro p { padding: 4px 0 0 6px; font-size: 37px; font-style: italic; white-space: nowrap; }
.learn { flex: 0 0 108px; display: flex; flex-direction: column; align-items: center; padding-top: 42px; background: #fff; color: #0c6bc0; font-size: 32px; line-height: 47px; text-align: center; text-decoration: none; }
.learn svg { margin-top: 28px; }
.data-card { display: grid; grid-template-columns: 611px 1fr 333px; grid-template-rows: auto auto auto; gap: 15px; padding: 16px; border-radius: 18px; background: #fff; box-shadow: 0 4px 40px rgba(130, 145, 170, .3); }
.cell { background: #f8f8fa; }
.stats { padding: 49px 20px 0 0; min-height: 716px; border-top-left-radius: 18px; }
.stats table { width: 100%; border-collapse: separate; border-spacing: 0; }
.stats th, .stats td { padding: 13px 12px 5px; border-bottom: 2px solid #c8c8c8; vertical-align: top; text-align: left; font-weight: 400; }
.stats th { width: 366px; }
.stats td { padding: 12px 12px 6px; text-align: right; font-size: 42px; font-weight: 700; line-height: 59px; }
.note { padding: 34px 17px 31px; color: #252423; }
.map { grid-row: 1 / 3; grid-column: 2; }
.map h3 { padding-left: 15px; }
.map-svg { width: 1120px; max-width: 100%; margin: 46px auto 0; }
.map-svg path { stroke: #fff; stroke-width: 2; vector-effect: non-scaling-stroke; stroke-linejoin: round; }
.c1 { fill: #bad1e8; }
.c2 { fill: #6eb9ff; }
.c3 { fill: #118dff; }
.c4 { fill: #0c6bc0; }
.c5 { fill: #0a4780; }
.legend { grid-row: 1 / 3; grid-column: 3; padding-left: 19px; border-top-right-radius: 18px; color: #252423; }
.legend ul { margin-top: 81px; }
.legend li { display: flex; align-items: center; gap: 14px; height: 67px; margin-bottom: 5px; line-height: 67px; }
.legend i { width: 35px; height: 67px; }
.k5 { background: #0a4780; }
.k4 { background: #0c6bc0; }
.k3 { background: #118dff; }
.k2 { background: #6eb9ff; }
.k1 { background: #bad1e8; }
.k0 { background: #e4e4e8; }
.unassigned { grid-column: 1 / 4; padding: 21px 0 36px; border-radius: 0 0 18px 18px; text-align: center; }

.embed-bar { display: grid; grid-template-columns: 1fr auto 1fr; align-items: center; height: 74px; padding: 0 24px; border-top: 2px solid #c8c8c8; background: #eaeaea; color: #000; font-size: 26px; font-weight: 600; line-height: 36px; }
.pager { display: flex; align-items: center; gap: 38px; margin-right: 24px; }
.pager button { border: 0; padding: 0; background: none; }
.share { display: flex; justify-content: flex-end; gap: 48px; }

/* footer */
footer { margin-top: 18px; padding: 48px 0 51px; border-top: 2px solid #e3e3e3; background: #f8f8f8; }
footer a { color: #0054a6; }
.cols { display: grid; grid-template-columns: repeat(3, minmax(0, 1fr)); gap: 60px; }
h4 { margin-bottom: 28px; padding-bottom: 6px; border-bottom: 4px solid #d4d4d4; color: #555; font-size: 32px; font-weight: 400; }
h4.second { margin-top: 69px; }
.links { display: grid; gap: 26px; }
.langs { white-space: nowrap; }
.langs a { line-height: 32px; }
.langs a:lang(ko) { font-size: 30px; }
.langs a:lang(ar) { font-size: 26px; }
.langs a:lang(pa) { font-size: 28px; }
.langs a:lang(km) { font-size: 34px; }
.langs a:lang(am) { font-size: 36px; }
.social { display: flex; gap: 29px; padding-top: 4px; }
.social svg { width: 58px; height: 58px; }
.medium-m { font: bold 44px "Liberation Serif", serif; fill: #fff; }
.subscribe { display: flex; align-items: center; gap: 6px; height: 90px; margin-top: 25px; padding: 0 36px 2px 34px; border: 0; border-radius: 10px; background: #4c5f24; color: #fff; font-size: 36px; }
.base-strip { height: 120px; background: #e9e9e9; }
.to-top { position: fixed; right: 50px; bottom: 50px; display: flex; align-items: center; justify-content: center; width: 84px; height: 84px; border-radius: 12px; background: rgba(160, 165, 163, .45); }
```
